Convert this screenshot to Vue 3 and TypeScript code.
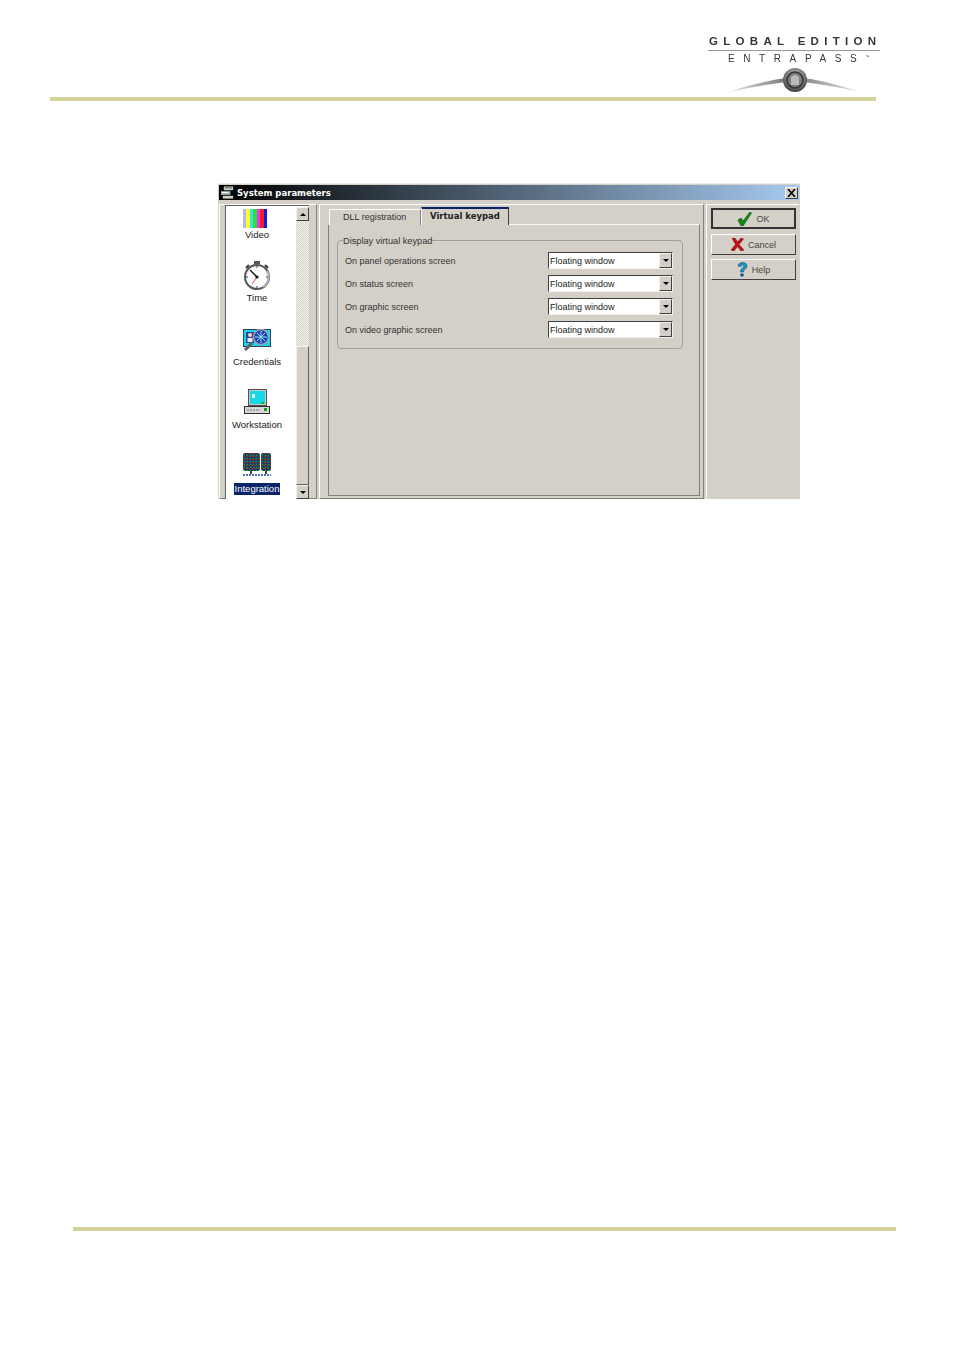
<script setup lang="ts">
const rows = [
  "On panel operations screen",
  "On status screen",
  "On graphic screen",
  "On video graphic screen",
];

const items = [
  { key: "video", label: "Video" },
  { key: "time", label: "Time" },
  { key: "credentials", label: "Credentials" },
  { key: "workstation", label: "Workstation" },
  { key: "integration", label: "Integration" },
];

const bars = ["#b8b8e8", "#ffff30", "#30e8e8", "#30e030", "#f030f0", "#f02020", "#1818e0"];
</script>

<template>
  <div class="page">
    <header class="header">
      <div class="logo">
        <div class="logo__top">GLOBAL EDITION</div>
        <div class="logo__sub">ENTRAPASS<sup>™</sup></div>
        <svg class="logo__mark" width="140" height="34" viewBox="0 0 140 34">
          <defs>
            <radialGradient id="knob" cx="50%" cy="40%" r="60%">
              <stop offset="0" stop-color="#d0d0d0" />
              <stop offset="0.55" stop-color="#8e8e8e" />
              <stop offset="1" stop-color="#3a3a3a" />
            </radialGradient>
            <linearGradient id="swooshL" x1="0" x2="1" y1="0" y2="0">
              <stop offset="0" stop-color="#e8e8e8" />
              <stop offset="1" stop-color="#777" />
            </linearGradient>
            <linearGradient id="swooshR" x1="1" x2="0" y1="0" y2="0">
              <stop offset="0" stop-color="#e8e8e8" />
              <stop offset="1" stop-color="#888" />
            </linearGradient>
          </defs>
          <path d="M4 28 C30 19 52 15 62 14 L62 18 C46 20 26 23 4 28Z" fill="url(#swooshL)" />
          <path d="M134 28 C110 19 88 15 78 14 L78 18 C94 20 114 23 134 28Z" fill="url(#swooshR)" />
          <circle cx="70" cy="16" r="12" fill="url(#knob)" />
          <circle cx="70" cy="16" r="8" fill="#7c7c7c" stroke="#333" stroke-width="1.6" />
          <path d="M66 21 V13 Q70 9 74 13 V21Z" fill="#b9b9b9" />
        </svg>
      </div>
    </header>
    <div class="rule rule--top"></div>

    <section class="dialog">
      <div class="titlebar">
        <svg class="titlebar__icon" width="14" height="14" viewBox="0 0 15 14">
          <rect x="3" y="0" width="10" height="4" fill="#d4d0c8" />
          <rect x="4" y="1" width="8" height="1" fill="#2a6a6a" />
          <rect x="0" y="5" width="10" height="4" fill="#9ab8b8" />
          <rect x="1" y="6" width="7" height="1" fill="#fff" />
          <rect x="2" y="10" width="11" height="3" fill="#d4d0c8" />
        </svg>
        <span class="titlebar__text">System parameters</span>
        <span class="titlebar__close">
          <svg width="9" height="8" viewBox="0 0 9 8">
            <path d="M1 0 L8 8 M8 0 L1 8" stroke="#000" stroke-width="1.6" />
          </svg>
        </span>
      </div>

      <div class="body">
        <aside class="side">
          <div class="list">
            <div class="list__items">
              <div v-for="item in items" :key="item.key" class="item" :class="`item--${item.key}`">
                <div class="item__icon">
                  <div v-if="item.key === 'video'" class="bars">
                    <span
                      v-for="c in bars"
                      :key="c"
                      class="bars__bar"
                      :style="{ background: c }"
                    ></span>
                  </div>

                  <svg v-else-if="item.key === 'time'" width="28" height="30" viewBox="0 0 28 30">
                    <rect x="11" y="0" width="6" height="3" fill="#555" />
                    <path d="M3 7 L6 4 M25 7 L22 4" stroke="#444" stroke-width="2.4" />
                    <circle cx="14" cy="16" r="12" fill="#fff" stroke="#555" stroke-width="2" />
                    <path d="M24 10 A12 12 0 0 1 20 26" fill="none" stroke="#b8b8b8" stroke-width="2" />
                    <path d="M14 16 L7 9" stroke="#111" stroke-width="1.3" />
                    <path d="M14 16 L9 23" stroke="#e06a6a" stroke-width="1.1" />
                    <circle cx="14" cy="16" r="1.6" fill="#111" />
                    <path d="M14 5 V7 M14 25 V27 M3 16 H5 M23 16 H25" stroke="#2a2a90" stroke-width="1" />
                  </svg>

                  <svg v-else-if="item.key === 'credentials'" width="28" height="22" viewBox="0 0 28 22">
                    <rect x="0.5" y="0.5" width="27" height="17" fill="#18d8e8" stroke="#304060" />
                    <rect x="3" y="3" width="8" height="11" fill="#3040a0" />
                    <circle cx="7" cy="6" r="2" fill="#f0d8c0" />
                    <rect x="4.5" y="9" width="5" height="4" fill="#e8e8f0" />
                    <path d="M9 14 L2 21" stroke="#606060" stroke-width="3" />
                    <circle cx="18" cy="8" r="7.5" fill="#2040c0" stroke="#a0a0a0" stroke-width="1.6" />
                    <path d="M12 8 H24 M18 2 V14 M14 4 L22 12 M22 4 L14 12" stroke="#90e0f0" stroke-width="1" />
                  </svg>

                  <svg v-else-if="item.key === 'workstation'" width="26" height="26" viewBox="0 0 26 26">
                    <rect x="4.5" y="0.5" width="18" height="16" fill="#c8c8c8" stroke="#505050" />
                    <rect x="6" y="2" width="15" height="13" fill="#18d8e8" />
                    <rect x="8" y="5" width="3" height="4" fill="#c8f4f8" />
                    <rect x="17" y="13" width="3" height="2" fill="#20b020" />
                    <rect x="0.5" y="17.5" width="25" height="7" fill="#d8d8d8" stroke="#303030" />
                    <path d="M3 21 H16" stroke="#707070" stroke-width="1" stroke-dasharray="2 1" />
                    <rect x="20" y="19" width="3" height="3" fill="#18a018" />
                  </svg>

                  <svg v-else width="28" height="23" viewBox="0 0 28 23">
                    <defs>
                      <pattern id="speckle" width="3" height="3" patternUnits="userSpaceOnUse">
                        <rect width="3" height="3" fill="#204848" />
                        <rect x="0" y="0" width="1" height="1" fill="#d02020" />
                        <rect x="2" y="1" width="1" height="1" fill="#2020c0" />
                        <rect x="1" y="2" width="1" height="1" fill="#20a040" />
                      </pattern>
                    </defs>
                    <rect x="0" y="0" width="17" height="18" rx="2" fill="url(#speckle)" />
                    <rect x="18" y="0" width="10" height="18" rx="2" fill="url(#speckle)" />
                    <path d="M8 18 V21 M23 18 V21" stroke="#305050" stroke-width="2" />
                    <path d="M0 22 H28" stroke="#2040a0" stroke-width="1.6" stroke-dasharray="2 1" />
                  </svg>
                </div>
                <span class="item__label">{{ item.label }}</span>
              </div>
            </div>

            <div class="scroll">
              <span class="scroll__btn"><i class="arrow arrow--up"></i></span>
              <span class="scroll__track"></span>
              <span class="scroll__thumb"></span>
              <span class="scroll__btn"><i class="arrow"></i></span>
            </div>
          </div>
        </aside>

        <main class="main">
          <div class="tabs">
            <span class="tab">DLL registration</span>
            <span class="tab tab--active">Virtual keypad</span>
          </div>
          <div class="sheet">
            <fieldset class="group">
              <legend class="group__legend">Display virtual keypad</legend>
              <div v-for="row in rows" :key="row" class="row">
                <span class="row__label">{{ row }}</span>
                <div class="combo">
                  <span class="combo__value">Floating window</span>
                  <span class="combo__btn"><i class="arrow"></i></span>
                </div>
              </div>
            </fieldset>
          </div>
        </main>

        <aside class="actions">
          <button class="btn btn--default">
            <svg width="15" height="14" viewBox="0 0 15 14">
              <path d="M1 8 L4 6 L6 9 L13 0 L14.500 1 L6 14 L4 14Z" fill="#128a12" stroke="#0a4a0a" stroke-width="0.6" />
            </svg>
            <span>OK</span>
          </button>
          <button class="btn">
            <svg width="13" height="13" viewBox="0 0 13 13">
              <path d="M1 0 L4 0 L6.500 4 L10 0 L12.500 1 L8 6.500 L13 12 L10 13 L6.500 8.500 L3 13 L0 12 L4.500 6.500Z" fill="#c81010" stroke="#5a0808" stroke-width="0.5" />
            </svg>
            <span>Cancel</span>
          </button>
          <button class="btn btn--help">
            <svg width="11" height="15" viewBox="0 0 11 15">
              <path d="M1 4 C1 0 10 -1 10 4 C10 7 6.500 7 6.500 10 L3.500 10 C3.500 6 7 6 7 4 C7 2.500 4 2.500 4 4.500Z" fill="#1898c8" stroke="#0a4a70" stroke-width="0.6" />
              <circle cx="5" cy="13" r="1.800" fill="#0a5a90" />
            </svg>
            <span>Help</span>
          </button>
        </aside>
      </div>
    </section>

    <div class="rule rule--bottom"></div>
  </div>
</template>

<style>
html,
body {
  margin: 0;
  background: #fff;
}
</style>

<style scoped>
.page {
  box-sizing: border-box;
  width: 954px;
  height: 1350px;
  padding-top: 30px;
  background: #fff;
  font-family: "Liberation Sans", Arial, sans-serif;
  overflow: hidden;
}

.header {
  display: flex;
  justify-content: flex-end;
  height: 67px;
  padding-right: 64px;
}

.logo {
  position: relative;
  box-sizing: border-box;
  width: 186px;
  height: 68px;
  padding-top: 5px;
  color: #33383e;
  filter: blur(0.45px);
}

.logo__top {
  margin: 0 10px 0 4px;
  padding: 0 0 3px 1px;
  border-bottom: 1px solid #9a9a9a;
  font-size: 11.5px;
  line-height: 12px;
  font-weight: 700;
  letter-spacing: 5.3px;
  white-space: nowrap;
}

.logo__sub {
  margin: 0 0 0 24px;
  font-size: 10px;
  line-height: 11px;
  font-weight: 400;
  letter-spacing: 8.6px;
  white-space: nowrap;
}

.logo__sub sup {
  font-size: 4px;
  letter-spacing: 0;
}

.logo__mark {
  display: block;
  margin: 0 0 0 21px;
}

.rule {
  height: 4px;
  background: #d4d49a;
}

.rule--top {
  width: 826px;
  margin-left: 50px;
}

.rule--bottom {
  width: 823px;
  margin: 728px 0 0 73px;
}

.dialog {
  box-sizing: border-box;
  width: 582px;
  height: 316px;
  margin: 82px 0 0 218px;
  padding: 1px 1px 0;
  display: flex;
  flex-direction: column;
  background: #d4d0c8;
  border-top: 1px solid #efede8;
  overflow: hidden;
}

.titlebar {
  display: flex;
  align-items: center;
  flex: none;
  height: 15px;
  padding: 0 1px 0 2px;
  background: linear-gradient(90deg, #000 0%, #a6caf0 100%);
}

.titlebar__icon {
  flex: none;
  margin-right: 2px;
}

.titlebar__text {
  flex: 1;
  font-family: "DejaVu Sans", sans-serif;
  font-size: 8.5px;
  font-weight: 700;
  color: #fff;
  white-space: nowrap;
}

.titlebar__close {
  display: flex;
  align-items: center;
  justify-content: center;
  width: 13px;
  height: 12px;
  box-sizing: border-box;
  background: #d4d0c8;
  border: 1px solid;
  border-color: #fff #404040 #404040 #fff;
}

.body {
  display: flex;
  flex: 1;
  min-height: 0;
  gap: 2px;
  padding-top: 4px;
}

.side {
  box-sizing: border-box;
  flex: none;
  width: 98px;
  padding: 0 7px 0 5px;
  border: 1px solid;
  border-color: #fff #808080 #808080 #fff;
}

.list {
  display: flex;
  height: 100%;
  background: #fff;
  border-left: 1px solid #606060;
  border-top: 1px solid #606060;
  overflow: hidden;
}

.list__items {
  flex: 1;
  min-width: 0;
  padding-right: 8px;
  overflow: hidden;
}

.item {
  display: flex;
  flex-direction: column;
  align-items: center;
  justify-content: flex-end;
  height: 63.75px;
  font-size: 9.5px;
  color: #222;
}

.item--video {
  height: 35px;
}

.item--time {
  height: 62.75px;
}

.item__icon {
  display: flex;
  justify-content: center;
  align-items: flex-end;
}

.item__label {
  margin-top: 1px;
  padding: 0 1px;
  line-height: 12px;
}

.item--integration .item__label {
  background: #0a246a;
  color: #fff;
}

.item--credentials svg {
  margin-bottom: 4px;
}

.item--workstation svg {
  margin-bottom: 3px;
}

.item--integration svg {
  margin-bottom: 6px;
}

.bars {
  display: flex;
  width: 24px;
  height: 19px;
  margin-right: 4px;
}

.bars__bar {
  flex: 1;
}

.scroll {
  display: flex;
  flex-direction: column;
  flex: none;
  width: 13px;
  margin-top: 1px;
}

.scroll__btn {
  display: flex;
  align-items: center;
  justify-content: center;
  flex: none;
  box-sizing: border-box;
  height: 14px;
  background: #d4d0c8;
  border: 1px solid;
  border-color: #f4f2ee #404040 #404040 #f4f2ee;
}

.scroll__track {
  flex: 1;
  background: repeating-conic-gradient(#d4d0c8 0 25%, #f6f5f2 0 50%) 0 0 / 2px 2px;
}

.scroll__thumb {
  flex: none;
  box-sizing: border-box;
  height: 139px;
  background: #d4d0c8;
  border: 1px solid;
  border-color: #f4f2ee #606060 #606060 #f4f2ee;
}

.arrow {
  display: block;
  width: 0;
  height: 0;
  border: 3px solid transparent;
  border-bottom-width: 0;
  border-top-color: #000;
}

.arrow--up {
  border-top-width: 0;
  border-bottom-width: 3px;
  border-top-color: transparent;
  border-bottom-color: #000;
}

.main {
  box-sizing: border-box;
  flex: none;
  width: 385px;
  padding: 2px 3px 0 8px;
  border: 1px solid;
  border-color: #fff #808080 #808080 #fff;
  font-size: 9px;
  color: #333;
}

.tabs {
  display: flex;
  align-items: flex-end;
  height: 18px;
  padding-left: 1px;
  position: relative;
  z-index: 1;
  margin-bottom: -1px;
}

.tab {
  box-sizing: border-box;
  width: 92px;
  height: 16px;
  padding-left: 13px;
  line-height: 14px;
  background: #d4d0c8;
  border: 1px solid;
  border-color: #fff #808080 transparent #fff;
  border-bottom: 0;
}

.tab--active {
  width: 88px;
  height: 18px;
  padding-left: 8px;
  line-height: 15px;
  font-family: "DejaVu Sans", sans-serif;
  font-weight: 700;
  font-size: 8.5px;
  color: #222;
  white-space: nowrap;
  border-top: 2px solid #0a246a;
  border-left-color: #fff;
  border-right-color: #404040;
}

.sheet {
  box-sizing: border-box;
  height: 272px;
  padding: 10px 16px 0 8px;
  border: 1px solid #808080;
  border-top-color: #f8f8f8;
}

.group {
  box-sizing: border-box;
  height: 114px;
  margin: 0;
  padding: 3px 9px 0 7px;
  border: 1px solid #a0a0a0;
  border-radius: 4px;
}

.group__legend {
  margin-left: -2px;
  padding: 1px 0 0;
  font-size: 9.2px;
  line-height: 10px;
  background: #d4d0c8;
}

.row {
  display: flex;
  align-items: center;
  justify-content: space-between;
  height: 23px;
}

.row__label {
  padding-top: 1px;
}

.combo {
  display: flex;
  align-items: center;
  box-sizing: border-box;
  width: 125px;
  height: 17px;
  background: #fff;
  border: 1px solid;
  border-color: #404040 #f4f2ee #f4f2ee #404040;
}

.combo__value {
  flex: 1;
  padding-left: 1px;
  font-size: 9px;
  color: #222;
}

.combo__btn {
  display: flex;
  align-items: center;
  justify-content: center;
  box-sizing: border-box;
  width: 13px;
  height: 15px;
  background: #d4d0c8;
  border: 1px solid;
  border-color: #f4f2ee #404040 #404040 #f4f2ee;
}

.actions {
  box-sizing: border-box;
  flex: 1;
  display: flex;
  flex-direction: column;
  gap: 5px;
  padding: 3px 3px 0 4px;
  border: 1px solid;
  border-color: #fff #808080 #808080 #fff;
  border-right: 0;
  border-bottom: 0;
}

.btn {
  display: flex;
  align-items: center;
  justify-content: center;
  gap: 4px;
  box-sizing: border-box;
  width: 85px;
  height: 21px;
  margin: 0;
  padding: 0;
  font-family: "Liberation Sans", Arial, sans-serif;
  font-size: 9px;
  color: #444;
  background: #d4d0c8;
  border: 1px solid;
  border-color: #fff #404040 #404040 #fff;
}

.btn--default {
  border: 2px solid #333;
}

.btn--help {
  margin-top: -1px;
}
</style>
